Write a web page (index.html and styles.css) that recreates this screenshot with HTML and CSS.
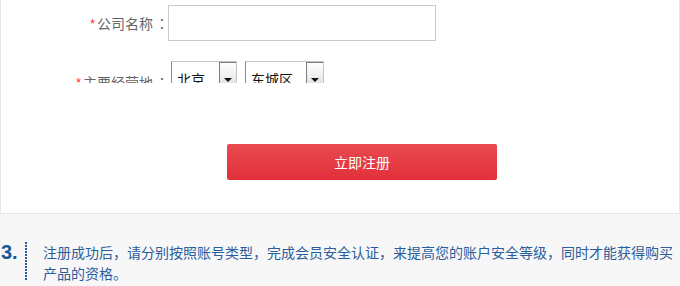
FILE: index.html
```html
<!DOCTYPE html>
<html lang="zh-CN">
<head>
<meta charset="utf-8">
<title>注册</title>
<link rel="stylesheet" href="styles.css">
</head>
<body>
<div class="panel">
  <div class="row row-name">
    <label class="label"><span class="req">*</span>公司名称<span class="colon" lang="zh-TW">：</span></label>
    <input class="text-input" type="text">
  </div>
  <div class="row row-area">
    <label class="label label-area"><span class="req">*</span>主要经营地<span class="colon" lang="zh-TW">：</span></label>
    <div class="sel sel-city"><span class="sel-text">北京</span><span class="sel-btn"><span class="tri"></span></span></div>
    <div class="sel sel-district"><span class="sel-text">东城区</span><span class="sel-btn"><span class="tri"></span></span></div>
  </div>
  <div class="actions">
    <button class="submit" type="button">立即注册</button>
  </div>
</div>
<div class="note">
  <div class="num">3.</div>
  <div class="dots"></div>
  <p class="note-text">注册成功后，请分别按照账号类型，完成会员安全认证，来提高您的账户安全等级，同时才能获得购买产品的资格。</p>
</div>
</body>
</html>
```
FILE: styles.css
```css
html, body {
  margin: 0;
  padding: 0;
}
body {
  width: 680px;
  height: 286px;
  overflow: hidden;
  background: #f7f7f7;
  font-family: "Liberation Sans", Arial, "Noto Sans CJK SC", sans-serif;
}
.panel {
  box-sizing: border-box;
  height: 214px;
  background: #fff;
  border: 1px solid #e6e6e6;
  border-top: none;
  padding-top: 5px;
}
.row {
  display: flex;
}
.row-name {
  align-items: center;
  height: 36px;
}
.label {
  box-sizing: border-box;
  width: 167px;
  padding-right: 1px;
  text-align: right;
  font-family: "Noto Sans CJK SC", sans-serif;
  font-size: 14px;
  line-height: 16px;
  color: #666;
  white-space: nowrap;
}
.colon {
  font-family: "Noto Sans CJK TC", "Noto Sans CJK SC", sans-serif;
  display: inline-block;
  width: 14px;
  text-align: center;
  position: relative;
  left: 2px;
}
.req {
  color: #f22;
  font-family: "Liberation Sans", sans-serif;
  font-size: 12px;
  margin-right: 2px;
  vertical-align: 1px;
}
.text-input {
  box-sizing: border-box;
  width: 268px;
  height: 36px;
  margin: 0;
  border: 1px solid #cacaca;
  padding: 0 6px;
  outline: none;
  background: #fff;
}
.row-area {
  margin-top: 20px;
  height: 22px;
  overflow: hidden;
  align-items: flex-start;
}
.label-area {
  margin-top: 13px;
}
.sel {
  box-sizing: border-box;
  display: flex;
  height: 30px;
  border-top: 1px solid #c4c4c4;
  border-left: 1px solid #8a8a8a;
  border-right: 1px solid #c4c4c4;
  background: #fff;
}
.sel-city {
  margin-left: 3px;
  width: 66px;
}
.sel-district {
  margin-left: 8px;
  width: 79px;
}
.sel-text {
  flex: 1;
  padding: 9px 0 0 5px;
  font-family: "Noto Sans CJK SC", sans-serif;
  font-size: 14px;
  line-height: 16px;
  color: #111;
}
.sel-btn {
  box-sizing: border-box;
  width: 17px;
  height: 100%;
  border-left: 1px solid #7d7d7d;
  border-top: 1px solid #7d7d7d;
  background: linear-gradient(#ffffff, #f1f1f1 40%, #d8d8d8);
  display: flex;
  justify-content: center;
  padding-top: 15px;
}
.tri {
  width: 0;
  height: 0;
  border-left: 4px solid transparent;
  border-right: 4px solid transparent;
  border-top: 4px solid #111;
}
.actions {
  display: flex;
  padding-left: 226px;
  margin-top: 61px;
}
.submit {
  width: 270px;
  height: 36px;
  border: none;
  border-radius: 2px;
  padding: 0;
  background: linear-gradient(#e84a50, #e2303a);
  color: #fff;
  font-family: "Noto Sans CJK SC", sans-serif;
  font-size: 14px;
  cursor: pointer;
}
.note {
  display: flex;
  align-items: flex-start;
  padding-top: 28px;
}
.num {
  width: 22px;
  padding-left: 1px;
  margin-top: 0;
  font-family: "Liberation Sans", Arial, sans-serif;
  font-weight: bold;
  font-size: 20px;
  line-height: 21px;
  color: #1b5797;
}
.dots {
  width: 2px;
  height: 38px;
  margin-left: 2px;
  background: repeating-linear-gradient(to bottom, #2a5c9a 0, #2a5c9a 2px, transparent 2px, transparent 3px);
}
.note-text {
  margin: 0 0 0 16px;
  width: 636px;
  font-family: "Noto Sans CJK SC", sans-serif;
  font-size: 14px;
  line-height: 21px;
  color: #2a5d9b;
}
```
